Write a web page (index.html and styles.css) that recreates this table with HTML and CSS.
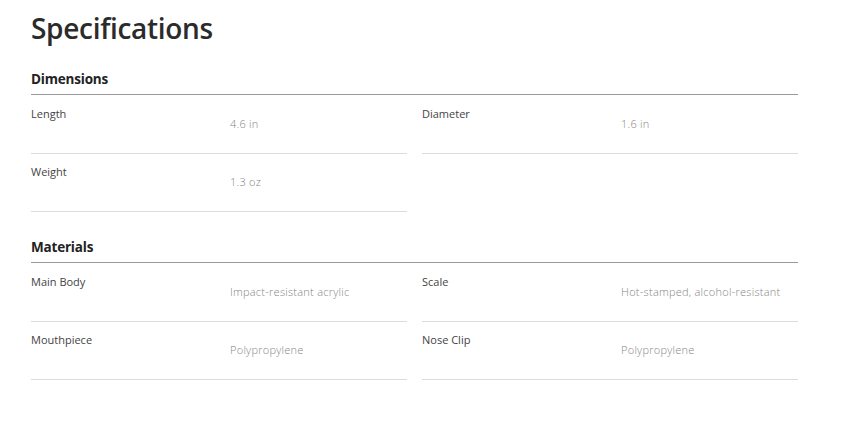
FILE: index.html
```html
<!DOCTYPE html>
<html>
<head>
<meta charset="utf-8">
<link rel="stylesheet" href="styles.css">
</head>
<body>
<div class="page">
  <h1 class="title">Specifications</h1>
  <section class="group">
    <h2 class="group-title">Dimensions</h2>
    <div class="grid">
      <div class="row"><div class="label">Length</div><div class="value">4.6 in</div></div>
      <div class="row"><div class="label">Diameter</div><div class="value">1.6 in</div></div>
      <div class="row"><div class="label">Weight</div><div class="value">1.3 oz</div></div>
    </div>
  </section>
  <section class="group">
    <h2 class="group-title">Materials</h2>
    <div class="grid">
      <div class="row"><div class="label">Main Body</div><div class="value">Impact-resistant acrylic</div></div>
      <div class="row"><div class="label">Scale</div><div class="value">Hot-stamped, alcohol-resistant</div></div>
      <div class="row"><div class="label">Mouthpiece</div><div class="value">Polypropylene</div></div>
      <div class="row"><div class="label">Nose Clip</div><div class="value">Polypropylene</div></div>
    </div>
  </section>
</div>
</body>
</html>
```

FILE: styles.css
```css
html, body {
  margin: 0;
  padding: 0;
  background: #ffffff;
}
.page {
  width: 767px;
  padding: 10px 0 0 31px;
  font-family: "Open Sans", "Liberation Sans", sans-serif;
  color: #333;
}
.title {
  margin: 0;
  font-size: 28px;
  font-weight: 600;
  line-height: 36px;
  color: #2b2b2b;
  letter-spacing: -0.3px;
}
.group {
  margin-top: 23px;
}
.group + .group {
  margin-top: 25px;
}
.group-title {
  margin: 0;
  font-size: 13.5px;
  font-weight: 700;
  letter-spacing: -0.2px;
  line-height: 20px;
  padding-bottom: 5px;
  border-bottom: 1px solid #9a9a9a;
  color: #222;
}
.grid {
  display: grid;
  grid-template-columns: 376px 376px;
  column-gap: 15px;
  padding-top: 1px;
}
.row {
  display: flex;
  padding-top: 11px;
  height: 46px;
  border-bottom: 1px solid #dcdcdc;
}
.label {
  width: 199px;
  font-size: 11px;
  line-height: 14px;
  color: #444;
}
.value {
  font-size: 11px;
  line-height: 14px;
  color: #858585;
  padding-top: 10px;
  font-weight: 300;
  letter-spacing: 0.25px;
}
```
